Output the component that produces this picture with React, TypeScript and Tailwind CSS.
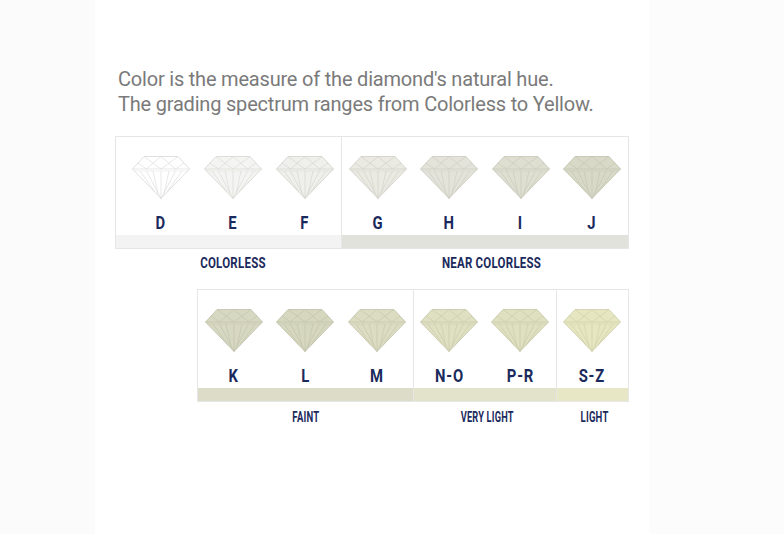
import React from 'react';

type Grade = { letter: string; fill: string; stroke: string };

const Diamond: React.FC<{ fill: string; stroke: string }> = ({ fill, stroke }) => (
  <svg width="58" height="43" viewBox="0 0 58 43" fill="none">
    <polygon points="12,0.5 46,0.5 57.5,13 29,42.5 0.5,13" fill={fill} stroke={stroke} strokeWidth="0.8" strokeLinejoin="round" />
    {/* crown */}
    <g stroke={stroke} strokeWidth="0.6">
      <line x1="12" y1="0.5" x2="29" y2="13" />
      <line x1="29" y1="0.5" x2="14.5" y2="13" />
      <line x1="29" y1="0.5" x2="43.5" y2="13" />
      <line x1="46" y1="0.5" x2="29" y2="13" />
      <line x1="6" y1="7" x2="14.5" y2="13" />
      <line x1="52" y1="7" x2="43.5" y2="13" />
      <line x1="0.5" y1="13" x2="57.5" y2="13" />
      <line x1="2" y1="15" x2="56" y2="15" strokeOpacity="0.6" />
      {/* pavilion */}
      <line x1="14.5" y1="15" x2="29" y2="42.5" />
      <line x1="43.5" y1="15" x2="29" y2="42.5" />
      <line x1="29" y1="15" x2="29" y2="42.5" />
      <line x1="8" y1="15" x2="23" y2="36" />
      <line x1="50" y1="15" x2="35" y2="36" />
      <line x1="21" y1="15" x2="26" y2="38" />
      <line x1="37" y1="15" x2="32" y2="38" />
    </g>
  </svg>
);

const Cell: React.FC<{ g: Grade; w: number }> = ({ g, w }) => (
  <div className="flex flex-col items-center" style={{ width: w }}>
    <Diamond fill={g.fill} stroke={g.stroke} />
    <div className="mt-[14px] h-5 leading-5 text-[19px] font-bold text-[#1b2a5c] tracking-[1px] [font-family:'Roboto',sans-serif] scale-x-[0.78]">
      {g.letter}
    </div>
  </div>
);

const Group: React.FC<{ grades: Grade[]; bar: string; w: number; divider?: boolean; pad?: boolean }> = ({
  grades,
  bar,
  w,
  divider,
  pad,
}) => (
  <div className={divider ? 'flex flex-col border-l border-[#e6e6e6]' : 'flex flex-col'}>
    <div className={pad ? 'flex pl-[9px] pt-[19px]' : 'flex pt-[19px]'}>
      {grades.map((g) => (
        <Cell key={g.letter} g={g} w={w} />
      ))}
    </div>
    <div className="mt-[2px] h-[13px]" style={{ backgroundColor: bar }} />
  </div>
);

const labelCls = "h-4 leading-4 font-bold text-[#1b2a5c] [font-family:'Roboto',sans-serif] tracking-[0.3px]";

export default function App() {
  const colorless: Grade[] = [
    { letter: 'D', fill: '#ffffff', stroke: '#d8d8d8' },
    { letter: 'E', fill: '#f4f4f2', stroke: '#d6d6d2' },
    { letter: 'F', fill: '#efefeb', stroke: '#d2d2cc' },
  ];
  const nearColorless: Grade[] = [
    { letter: 'G', fill: '#eaeae3', stroke: '#cfcfc6' },
    { letter: 'H', fill: '#e3e3da', stroke: '#cbcbc0' },
    { letter: 'I', fill: '#dedfd1', stroke: '#c6c7b8' },
    { letter: 'J', fill: '#d9d9c8', stroke: '#c2c2b0' },
  ];
  const faint: Grade[] = [
    { letter: 'K', fill: '#d7d8c2', stroke: '#c0c1aa' },
    { letter: 'L', fill: '#d6d7bf', stroke: '#bfc0a8' },
    { letter: 'M', fill: '#dbdcc1', stroke: '#c3c4a9' },
  ];
  const veryLight: Grade[] = [
    { letter: 'N-O', fill: '#dfe0c2', stroke: '#c6c7a9' },
    { letter: 'P-R', fill: '#dfe0c0', stroke: '#c6c7a8' },
  ];
  const light: Grade[] = [{ letter: 'S-Z', fill: '#e6e6c0', stroke: '#cdcda8' }];

  return (
    <div className="w-[784px] h-[534px] flex bg-white overflow-hidden">
      <div className="w-[95px] bg-[#fbfbfb]" />
      <div className="w-[554px] bg-white pt-[67px]">
        <div className="pl-[23px] text-[20px] leading-[25px] text-[#7a7a7a] [font-family:'Roboto',sans-serif] tracking-[-0.2px]">
          <p>Color is the measure of the diamond's natural hue.</p>
          <p>The grading spectrum ranges from Colorless to Yellow.</p>
        </div>

        <div className="ml-[20px] mt-[19px] w-fit">
          <div className="flex border border-[#e6e6e6]">
            <Group grades={colorless} bar="#f3f3f3" w={72} pad />
            <Group grades={nearColorless} bar="#e2e2dc" w={71.5} divider />
          </div>
          <div className="flex mt-[6px] text-[14px]">
            <div className="w-[226px] pl-[9px] flex justify-center">
              <span className={`${labelCls} scale-x-[0.82]`}>COLORLESS</span>
            </div>
            <div className="w-[287px] pl-[14px] flex justify-center">
              <span className={`${labelCls} scale-x-[0.82]`}>NEAR COLORLESS</span>
            </div>
          </div>
        </div>

        <div className="ml-[102px] mt-[18px] w-fit">
          <div className="flex border border-[#e6e6e6]">
            <Group grades={faint} bar="#dcdcc9" w={71.5} />
            <Group grades={veryLight} bar="#e3e3cb" w={71} divider />
            <Group grades={light} bar="#e7e7c6" w={71} divider />
          </div>
          <div className="flex mt-[7px] text-[14px]">
            <div className="w-[216px] pl-[2px] flex justify-center">
              <span className={`${labelCls} scale-x-[0.68]`}>FAINT</span>
            </div>
            <div className="w-[143px] pl-[6px] flex justify-center">
              <span className={`${labelCls} scale-x-[0.66]`}>VERY LIGHT</span>
            </div>
            <div className="w-[72px] pl-[6px] flex justify-center">
              <span className={`${labelCls} scale-x-[0.68]`}>LIGHT</span>
            </div>
          </div>
        </div>
      </div>
      <div className="flex-1 bg-[#fcfcfc]" />
    </div>
  );
}
